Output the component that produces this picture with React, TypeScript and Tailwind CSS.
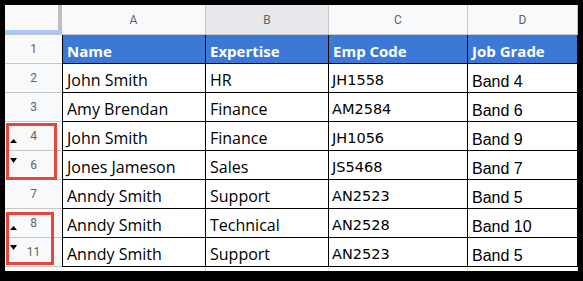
const rows = [
  { n: '2', a: 'John Smith', b: 'HR', c: 'JH1558', d: 'Band 4' },
  { n: '3', a: 'Amy Brendan', b: 'Finance', c: 'AM2584', d: 'Band 6' },
  { n: '4', a: 'John Smith', b: 'Finance', c: 'JH1056', d: 'Band 9', mark: 'up' },
  { n: '6', a: 'Jones Jameson', b: 'Sales', c: 'JS5468', d: 'Band 7', mark: 'down' },
  { n: '7', a: 'Anndy Smith', b: 'Support', c: 'AN2523', d: 'Band 5' },
  { n: '8', a: 'Anndy Smith', b: 'Technical', c: 'AN2528', d: 'Band 10', mark: 'up' },
  { n: '11', a: 'Anndy Smith', b: 'Support', c: 'AN2523', d: 'Band 5', mark: 'down' },
]

const grid = 'grid grid-cols-[57px_144px_123px_139px_110px]'
const rowNum = "flex items-center justify-center bg-[#f8f9fa] border-b border-[#c4c7c5] text-[12px] text-[#5f6368] font-['Roboto',sans-serif]"
const cell = 'flex items-end border-r border-b border-black leading-none'

function Marker({ dir }: { dir?: string }) {
  if (dir === 'up') {
    return (
      <svg className="absolute left-[5px] bottom-[7px]" width="7" height="4" viewBox="0 0 7 4">
        <polygon points="0,4 3.5,0 7,4" fill="#000" />
      </svg>
    )
  }
  if (dir === 'down') {
    return (
      <svg className="absolute left-[5px] top-[7px]" width="7" height="5" viewBox="0 0 7 5">
        <polygon points="0,0 7,0 3.5,5" fill="#000" />
      </svg>
    )
  }
  return null
}

export default function App() {
  return (
    <div className="w-[583px] h-[281px] bg-black pt-[5px] px-[5px] pb-[10px]">
      <div className="relative h-full bg-white overflow-hidden">
        {/* column letters */}
        <div className={`${grid} h-[30px] text-[12px] text-[#5f6368] font-['Roboto',sans-serif]`}>
          <div className="flex flex-col bg-[#f8f9fa]">
            <div className="flex-1 border-r-4 border-[#bdbdbd]" />
            <div className="h-[4px] bg-[#a6c8ff]" />
            <div className="h-[1px] bg-[#c4c7c5]" />
          </div>
          <div className="flex items-center justify-center bg-[#f8f9fa] border-r border-b border-[#c4c7c5]">A</div>
          <div className="flex items-center justify-center bg-[#e7e8eb] border-r border-b border-[#c4c7c5]">B</div>
          <div className="flex items-center justify-center bg-[#f8f9fa] border-r border-b border-[#c4c7c5]">C</div>
          <div className="flex items-center justify-center bg-[#f8f9fa] border-r border-b border-[#c4c7c5]">D</div>
        </div>

        {/* header row */}
        <div className={`${grid} h-[29px]`}>
          <div className={rowNum}>1</div>
          <div className={`${cell} border-l bg-[#3c78d8] pl-[4px] pb-[4.5px] text-white text-[15px] font-bold font-['Open_Sans',sans-serif]`}>Name</div>
          <div className={`${cell} bg-[#3c78d8] pl-[4px] pb-[4.5px] text-white text-[15px] font-bold font-['Open_Sans',sans-serif]`}>Expertise</div>
          <div className={`${cell} bg-[#3c78d8] pl-[4px] pb-[4.5px] text-white text-[15px] font-bold font-['Open_Sans',sans-serif]`}>Emp Code</div>
          <div className={`${cell} bg-[#3c78d8] pl-[4px] pb-[4.5px] text-white text-[15px] font-bold font-['Open_Sans',sans-serif]`}>Job Grade</div>
        </div>

        {rows.map((r) => (
          <div key={r.n} className={`${grid} h-[29px]`}>
            <div className={`${rowNum} relative`}>
              {r.n}
              <Marker dir={r.mark} />
            </div>
            <div className={`${cell} border-l pl-[4px] pb-[4px] text-[16px] text-black font-['Open_Sans',sans-serif]`}>{r.a}</div>
            <div className={`${cell} pl-[4px] pb-[4px] text-[16px] text-black font-['Open_Sans',sans-serif]`}>{r.b}</div>
            <div className={`${cell} pl-[3px] pb-[5px] text-[14.5px] text-black font-['DejaVu_Sans',sans-serif]`}>{r.c}</div>
            <div className={`${cell} pl-[4px] pb-[2.5px] text-[16px] text-black font-['Liberation_Sans',Arial,sans-serif]`}>{r.d}</div>
          </div>
        ))}

        {/* partial next row */}
        <div className={`${grid} h-[10px]`}>
          <div className="bg-[#f8f9fa]" />
          <div className="border-r border-[#e2e2e2]" />
          <div className="border-r border-[#e2e2e2]" />
          <div className="border-r border-[#e2e2e2]" />
          <div className="border-r border-[#e2e2e2]" />
        </div>

        {/* annotation boxes */}
        <div className="absolute left-[1px] top-[118px] w-[51px] h-[57px] border-[3px] border-[#e5453b]" />
        <div className="absolute left-[1px] top-[207px] w-[48px] h-[53px] border-[3px] border-[#e5453b]" />
      </div>
    </div>
  )
}
